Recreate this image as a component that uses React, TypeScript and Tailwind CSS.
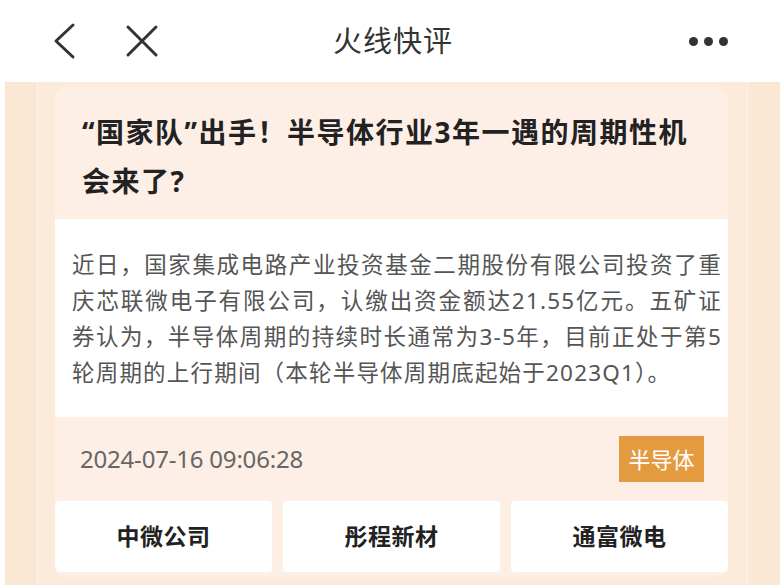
const font = { fontFamily: '"Noto Sans", "Noto Sans CJK SC", sans-serif' };

const stocks = ['中微公司', '彤程新材', '通富微电'];

export default function App() {
  return (
    <div className="w-[780px] h-[585px] overflow-hidden bg-white" style={font}>
      {/* top bar */}
      <div className="h-[82px] flex items-center px-[52px] bg-white">
        <button className="w-[28px] h-[40px] flex items-center justify-start">
          <svg width="24" height="38" viewBox="0 0 24 38" fill="none" stroke="#333" strokeWidth="3" strokeLinecap="round" strokeLinejoin="round">
            <path d="M21 3 L4 19 L21 35" />
          </svg>
        </button>
        <button className="ml-[45px] w-[34px] h-[34px] flex items-center justify-center">
          <svg width="34" height="34" viewBox="0 0 34 34" fill="none" stroke="#333" strokeWidth="3" strokeLinecap="round">
            <path d="M3 3 L31 31 M31 3 L3 31" />
          </svg>
        </button>
        <div className="flex-1 text-center text-[29px] text-[#333] tracking-[1px] -ml-[62px]">火线快评</div>
        <div className="flex items-center gap-[6px]">
          <span className="w-[9px] h-[9px] rounded-full bg-[#333]" />
          <span className="w-[9px] h-[9px] rounded-full bg-[#333]" />
          <span className="w-[9px] h-[9px] rounded-full bg-[#333]" />
        </div>
      </div>

      {/* page */}
      <div className="h-[503px] ml-[5px] bg-[#fbe8d4] pl-[32px] pr-[32px]">
        <div className="h-full bg-[#fcebda] border-l border-r border-[#fdf3ea] pl-[17px] pr-[19px] pt-[5px]">
          <div className="rounded-[12px] bg-[#fdefe6] overflow-hidden">
            <div className="pl-[27px] pr-[20px] pt-[21px] pb-[13px] text-[28px] leading-[49px] font-bold text-[#222] tracking-[1.5px]">
              “国家队”出手！半导体行业3年一遇的周期性机<br />会来了?
            </div>
            <div className="bg-white pl-[17px] pt-[28px] pb-[26px]">
              <p className="w-[650px] text-[22.5px] leading-[36px] tracking-[1.2px] text-[#555] text-justify">
                近日，国家集成电路产业投资基金二期股份有限公司投资了重庆芯联微电子有限公司，认缴出资金额达21.55亿元。五矿证券认为，半导体周期的持续时长通常为3-5年，目前正处于第5轮周期的上行期间（本轮半导体周期底起始于2023Q1）。
              </p>
            </div>
            <div className="h-[84px] flex items-center justify-between pl-[25px] pr-[24px]">
              <span className="text-[24px] text-[#666] tracking-[-0.2px]">2024-07-16 09:06:28</span>
              <span className="h-[46px] w-[85px] flex items-center justify-center bg-[#e49a3f] text-white text-[22px]">半导体</span>
            </div>
            <div className="grid grid-cols-3 gap-[11px] pb-[5px]">
              {stocks.map((s) => (
                <div key={s} className="h-[71px] bg-white rounded-[4px] flex items-center justify-center text-[23px] font-bold text-[#222] tracking-[0.5px]">
                  {s}
                </div>
              ))}
            </div>
          </div>
        </div>
      </div>
    </div>
  );
}
